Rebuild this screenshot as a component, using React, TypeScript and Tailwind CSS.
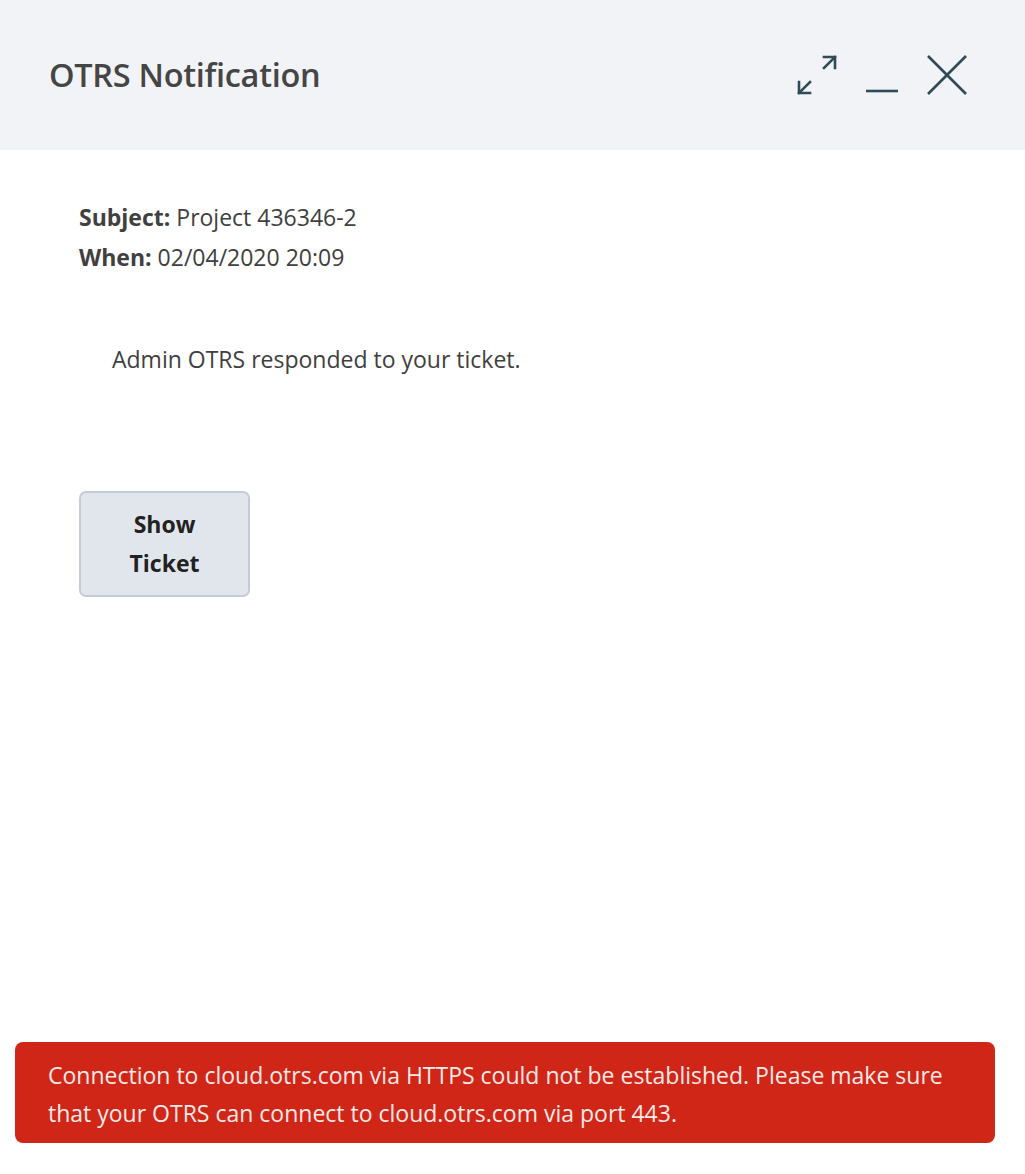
import React from "react";

const font = { fontFamily: '"Source Sans Pro", "Open Sans", "Noto Sans", sans-serif' };

export default function App() {
  return (
    <div className="w-[1025px] h-[1174px] bg-white flex flex-col" style={font}>
      <div className="h-[150px] bg-[#f2f3f7] flex items-center justify-between pl-[49px] pr-[58px] shrink-0">
        <h1 className="text-[32.5px] font-semibold text-[#454545] tracking-[-0.3px] mt-[1px]">OTRS Notification</h1>
        <div className="flex items-center gap-[29px] text-[#2f4b58]">
          <svg width="40" height="40" viewBox="0 0 40 40" fill="none" stroke="currentColor" strokeWidth="2.6" strokeLinecap="square">
            <path d="M13 27 L2 38" />
            <path d="M2 27 V38 H13" />
            <path d="M27 13 L38 2" />
            <path d="M27 2 H38 V13" />
          </svg>
          <svg width="32" height="40" viewBox="0 0 32 40" fill="none" stroke="currentColor" strokeWidth="2.6">
            <path d="M0 36 H32" />
          </svg>
          <svg width="40" height="40" viewBox="0 0 40 40" fill="none" stroke="currentColor" strokeWidth="2.6">
            <path d="M1 1 L39 39" />
            <path d="M39 1 L1 39" />
          </svg>
        </div>
      </div>
      <div className="flex-1 flex flex-col pl-[79px] pt-[47px] text-[23px] text-[#404040]">
        <div className="leading-[40px]">
          <div><span className="font-bold">Subject:</span> Project 436346-2</div>
          <div><span className="font-bold">When:</span> 02/04/2020 20:09</div>
        </div>
        <p className="pl-[33px] mt-[62px] leading-[40px]">Admin OTRS responded to your ticket.</p>
        <button className="mt-[112px] w-[171px] h-[106px] bg-[#e1e6ed] border-2 border-[#c6ccd5] rounded-[7px] text-[23px] font-bold text-[#222] leading-[39px]">
          Show<br />Ticket
        </button>
      </div>
      <div className="ml-[15px] mr-[30px] mb-[31px] bg-[#d02618] rounded-[8px] pl-[33px] pr-[30px] pt-[14px] pb-[11px] text-[23px] leading-[38px] text-[#fbe9e6]">
        Connection to cloud.otrs.com via HTTPS could not be established. Please make sure that your OTRS can connect to cloud.otrs.com via port 443.
      </div>
    </div>
  );
}
